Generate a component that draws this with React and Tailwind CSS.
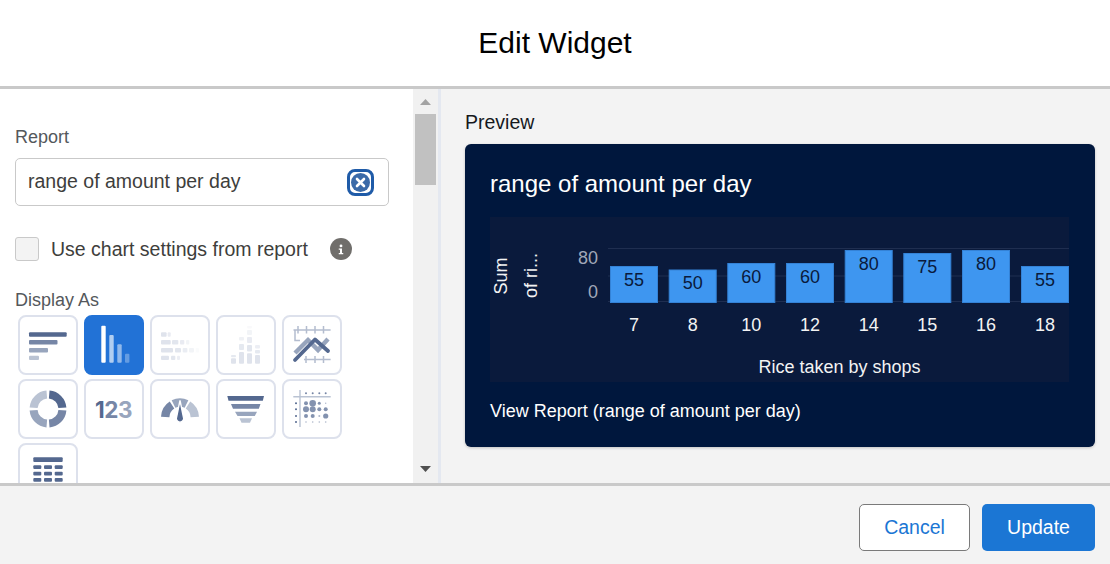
const NAVY = ['#54688f', '#7686a6', '#98a5bd', '#bac3d3']

function Tile({ active, children }) {
  return (
    <div className={active
      ? 'h-[60px] w-[60px] rounded-lg border-2 border-[#2272d6] bg-[#2272d6]'
      : 'h-[60px] w-[60px] rounded-lg border-2 border-[#dde1ec] bg-white'}>
      <svg width="60" height="60" viewBox="0 0 60 60" className="-m-[2px] block max-w-none">{children}</svg>
    </div>
  )
}

function HBarIcon() {
  return (
    <>
      <rect x="11" y="17.3" width="37.7" height="4.4" rx="1" fill={NAVY[0]} />
      <rect x="11" y="25" width="28.5" height="4.4" rx="1" fill={NAVY[1]} />
      <rect x="11" y="33" width="19" height="4.4" rx="1" fill={NAVY[2]} />
      <rect x="11" y="40.7" width="10" height="4.4" rx="1" fill={NAVY[3]} />
    </>
  )
}

function VBarIcon() {
  return (
    <>
      <rect x="17.3" y="10.7" width="4.4" height="37" rx="1" fill="#fff" />
      <rect x="25.3" y="20" width="4.4" height="27.7" rx="1" fill="#fff" fillOpacity=".65" />
      <rect x="33.3" y="29.3" width="4.4" height="18.4" rx="1" fill="#fff" fillOpacity=".5" />
      <rect x="41" y="38.7" width="4.4" height="9" rx="1" fill="#fff" fillOpacity=".3" />
    </>
  )
}

const HEAT_ROWS = [
  [17.3, [[11, 5.6, 1], [17.7, 3, .7]]],
  [25, [[11, 9.7, 1], [22, 6.3, .9], [30, 4.3, .7], [36, 3.3, .4]]],
  [33, [[11, 12, 1], [25, 6, .9], [32.7, 4.7, .65], [39, 5, .4], [45.7, 3.3, .15]]],
  [40.7, [[11, 8, 1], [21, 4.3, .9], [27, 3, .6]]],
]

function HeatHIcon() {
  return (
    <>
      {HEAT_ROWS.map(([y, cells]) => cells.map(([x, w, o]) => (
        <rect key={`${y}-${x}`} x={x} y={y} width={w} height="4.4" rx="1" fill="#dfe3ec" fillOpacity={o} />
      )))}
    </>
  )
}

const HEAT_COLS = [
  [15, [[43.3, 5.4, 1], [40, 2.3, .8]]],
  [23, [[37, 11.7, 1], [29, 6, .8], [22, 3.5, .5]]],
  [31, [[38.3, 10.4, 1], [30, 6.5, .9], [22, 6, .7], [15, 5, .4], [11, 2.5, .2]]],
  [39, [[40, 8.7, 1], [35, 3.4, .8], [30, 3.4, .6]]],
]

function HeatVIcon() {
  return (
    <>
      {HEAT_COLS.map(([x, cells]) => cells.map(([y, h, o]) => (
        <rect key={`${x}-${y}`} x={x} y={y} width="5" height={h} rx="1" fill="#dfe3ec" fillOpacity={o} />
      )))}
    </>
  )
}

function LineIcon() {
  return (
    <>
      <g stroke="#b4bdcf" strokeWidth="1.5" fill="none">
        <path d="M11.5 15H48.6M16 11V18.5M24.5 11V18.5M33 11V18.5M41.5 11V18.5M13 15V25.5H18" />
        <path d="M22 44.5H48.6M24 41V48M33 41V48M41.5 41V48" />
      </g>
      <path d="M13 38L26 25L36 35L46 24" stroke={NAVY[2]} strokeWidth="4.4" fill="none" />
      <path d="M13 45L33 24.5L46 36" stroke={NAVY[0]} strokeWidth="3.8" fill="none" strokeLinecap="round" strokeLinejoin="round" />
    </>
  )
}

function DonutIcon() {
  return (
    <g fill="none" strokeWidth="8">
      <path d="M31.2 15.6A14.4 14.4 0 0 1 44.4 28.8" stroke={NAVY[0]} />
      <path d="M44.4 31.2A14.4 14.4 0 0 1 31.2 44.4" stroke={NAVY[1]} />
      <path d="M28.8 44.4A14.4 14.4 0 0 1 15.6 31.2" stroke={NAVY[2]} />
      <path d="M15.6 28.8A14.4 14.4 0 0 1 28.8 15.6" stroke={NAVY[3]} />
    </g>
  )
}

function NumberIcon() {
  return (
    <text x="11" y="38.5" fontSize="22.5" fontWeight="700" fontFamily="Inter, 'Liberation Sans', sans-serif" letterSpacing="-.5">
      <tspan fill={NAVY[0]}>1</tspan>
      <tspan fill={NAVY[1]}>2</tspan>
      <tspan fill={NAVY[2]}>3</tspan>
    </text>
  )
}

function GaugeIcon() {
  return (
    <>
      <g fill="none" strokeWidth="8.4">
        <path d="M15.2 38A14.8 14.8 0 0 1 22 26" stroke={NAVY[1]} />
        <path d="M23.5 25A14.8 14.8 0 0 1 36.5 25" stroke={NAVY[2]} />
        <path d="M38 26A14.8 14.8 0 0 1 44.8 38" stroke={NAVY[3]} />
      </g>
      <path d="M30 21.5L26.6 38A3.7 3.7 0 1 0 33.4 38Z" fill={NAVY[0]} stroke="#fff" strokeWidth="1.4" />
    </>
  )
}

function FunnelIcon() {
  return (
    <>
      <path d="M11.3 17H48L46.8 21.7H12.5Z" fill={NAVY[0]} />
      <path d="M15 25H44.5L42.8 29.7H17Z" fill={NAVY[1]} />
      <path d="M19 32.7H41L38.8 37H21.5Z" fill={NAVY[2]} />
      <path d="M23.5 39.3H36L34 43.7H25.5Z" fill={NAVY[3]} />
    </>
  )
}

const BUBBLES = [
  [24.3, [2, 3.3, 1.5, .7]],
  [30.3, [3, 3, 2, 2]],
  [37, [2, 2, 1, 2.6]],
  [43, [.8, .8, .8, .8]],
]

function BubbleIcon() {
  const xs = [24, 30.7, 37.3, 43.7]
  return (
    <>
      <path d="M11.3 17.7H48.7M18 11V48" stroke="#bac3d3" strokeWidth="1.4" />
      {xs.map((x) => <circle key={x} cx={x} cy="14.3" r="1" fill={NAVY[1]} />)}
      {[24.3, 30.3, 37, 43].map((y) => <circle key={y} cx="14" cy={y} r="1" fill={NAVY[0]} />)}
      {BUBBLES.map(([y, rs]) => rs.map((r, i) => (
        <circle key={`${y}-${i}`} cx={xs[i]} cy={y} r={r} fill={NAVY[1]} fillOpacity={r < 1.2 ? .6 : .9} />
      )))}
    </>
  )
}

function TableIcon() {
  return (
    <>
      <rect x="15.3" y="14.3" width="29.4" height="4.7" rx="1" fill={NAVY[0]} />
      {[22.3, 28.7, 35, 41.5].map((y) => [15.3, 26, 36.7].map((x) => (
        <rect key={`${x}-${y}`} x={x} y={y} width="8" height="3.8" rx="1" fill={NAVY[0]} />
      )))}
    </>
  )
}

const BARS = [
  { label: '7', value: 55, x: 610, top: 266, textY: 286 },
  { label: '8', value: 50, x: 668.7, top: 269.5, textY: 289 },
  { label: '10', value: 60, x: 727.3, top: 263, textY: 283 },
  { label: '12', value: 60, x: 786, top: 263, textY: 283 },
  { label: '14', value: 80, x: 844.7, top: 250, textY: 270 },
  { label: '15', value: 75, x: 903.3, top: 253, textY: 273 },
  { label: '16', value: 80, x: 962, top: 250, textY: 270 },
  { label: '18', value: 55, x: 1021, top: 266, textY: 286 },
]

function Chart() {
  return (
    <svg width="579" height="165" viewBox="490 217 579 165" className="block" fontFamily="'Liberation Sans', Arial, sans-serif">
      <rect x="490" y="217" width="579" height="165" fill="#0a1a3c" />
      <path d="M608 248.5H1069M608 276H1069M608 301.5H1069" stroke="#1f2e50" strokeWidth="1" />
      <text x="598" y="264" textAnchor="end" fontSize="18" fill="#a0a8b8">80</text>
      <text x="598" y="298" textAnchor="end" fontSize="18" fill="#a0a8b8">0</text>
      <text transform="translate(507 294.5) rotate(-90)" fontSize="18" fill="#f3f3f3">Sum</text>
      <text transform="translate(537 298) rotate(-90)" fontSize="18" fill="#f3f3f3">of ri...</text>
      {BARS.map((b) => (
        <g key={b.x}>
          <rect x={b.x + .5} y={b.top + .5} width="47" height={302 - b.top} fill="#3e96f0" stroke="#3482d6" strokeWidth="1" />
          <text x={b.x + 24} y={b.textY} textAnchor="middle" fontSize="18" fill="#0a1a3c">{b.value}</text>
          <text x={b.x + 24} y="331" textAnchor="middle" fontSize="18" fill="#f3f3f3">{b.label}</text>
        </g>
      ))}
      <text x="839.5" y="373" textAnchor="middle" fontSize="18" fill="#f3f3f3">Rice taken by shops</text>
    </svg>
  )
}

export default function App() {
  return (
    <div className="flex h-[564px] w-[1110px] flex-col overflow-hidden bg-white font-['Liberation_Sans',Arial,sans-serif]">
      <header className="flex h-[89px] shrink-0 items-center justify-center border-b-[3px] border-[#c9c9c9] bg-white pb-px">
        <h1 className="text-[30px] leading-none text-black">Edit Widget</h1>
      </header>

      <div className="flex h-[394px] shrink-0">
        <div className="w-[413px] shrink-0 overflow-hidden bg-white pl-[15px] pt-[38px]">
          <label className="block text-lg leading-5 text-[#54585c]">Report</label>
          <div className="mt-[11px] flex h-12 w-[374px] items-center justify-between rounded-[5px] border border-[#c9c9c9] pl-3 pr-[14px]">
            <span className="text-[19.5px] text-[#3e3e3c]">range of amount per day</span>
            <span className="flex h-[27px] w-[27px] items-center justify-center rounded-[8px] border-[3px] border-[#1f5ba8] bg-white">
              <svg width="19" height="19" viewBox="0 0 19 19" className="shrink-0">
                <circle cx="9.5" cy="9.5" r="9.5" fill="#3b6aa8" />
                <path d="M6 6L13 13M13 6L6 13" stroke="#fff" strokeWidth="2.6" strokeLinecap="round" />
              </svg>
            </span>
          </div>

          <div className="mt-[31px] flex h-6 items-center">
            <span className="h-6 w-6 shrink-0 rounded-[3px] border border-[#c9c9c9] bg-[#f3f3f3]" />
            <span className="ml-3 mt-px text-[19.5px] text-[#3e3e3c]">Use chart settings from report</span>
            <span className="ml-[22px] flex h-[22px] w-[22px] items-center justify-center rounded-full bg-[#706e6b]">
              <svg width="6" height="11" viewBox="0 0 8 14" fill="#fff">
                <circle cx="4" cy="2.2" r="1.9" />
                <path d="M1 5.6H5.3V11.6H7V13.4H1V11.6H2.7V7.4H1Z" />
              </svg>
            </span>
          </div>

          <div className="mt-[29px] text-lg leading-5 text-[#54585c]">Display As</div>
          <div className="ml-[3px] mt-[5px] grid w-[324px] grid-cols-[repeat(5,60px)] gap-x-1.5 gap-y-1">
            <Tile><HBarIcon /></Tile>
            <Tile active><VBarIcon /></Tile>
            <Tile><HeatHIcon /></Tile>
            <Tile><HeatVIcon /></Tile>
            <Tile><LineIcon /></Tile>
            <Tile><DonutIcon /></Tile>
            <Tile><NumberIcon /></Tile>
            <Tile><GaugeIcon /></Tile>
            <Tile><FunnelIcon /></Tile>
            <Tile><BubbleIcon /></Tile>
            <Tile><TableIcon /></Tile>
          </div>
        </div>

        <div className="flex w-[25px] shrink-0 flex-col items-center bg-[#f1f1f1]">
          <svg width="11" height="6" viewBox="0 0 11 6" className="mt-[10px]"><path d="M5.5 0L11 6H0Z" fill="#a3a3a3" /></svg>
          <div className="mt-[9px] h-[71px] w-[21px] bg-[#c1c1c1]" />
          <div className="flex-1" />
          <svg width="11" height="6" viewBox="0 0 11 6" className="mb-[11px]"><path d="M0 0H11L5.5 6Z" fill="#505050" /></svg>
        </div>

        <div className="flex-1 border-l-[3px] border-[#e4e8f0] bg-[#f3f3f3] pl-6 pt-[21px]">
          <div className="text-[19.5px] leading-6 text-[#16181d]">Preview</div>
          <div className="mt-[10px] h-[303px] w-[630px] rounded-md bg-[#00173d] px-[25px] shadow-[0_1px_3px_rgba(0,0,0,0.2)]">
            <div className="pt-[23px] text-2xl leading-[34px] text-white">range of amount per day</div>
            <div className="mt-4"><Chart /></div>
            <div className="mt-[19px] text-lg leading-5 text-white">View Report (range of amount per day)</div>
          </div>
        </div>
      </div>

      <footer className="flex flex-1 items-start justify-end gap-3 border-t-[3px] border-[#c9c9c9] bg-[#f3f3f3] pr-[15px] pt-[18px]">
        <button className="h-[47px] w-[111px] rounded-[5px] border border-[#7a7a7a] bg-white text-[19.5px] text-[#1b76d4]">Cancel</button>
        <button className="h-[47px] w-[113px] rounded-[5px] bg-[#1b76d4] text-[19.5px] text-white">Update</button>
      </footer>
    </div>
  )
}
